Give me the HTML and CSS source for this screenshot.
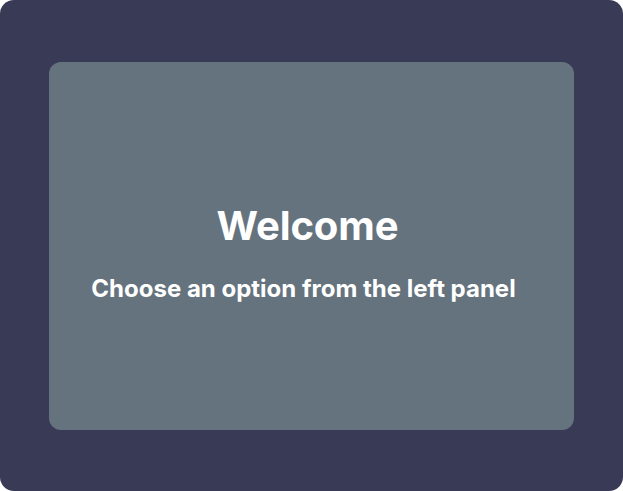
FILE: index.html
```html
<!DOCTYPE html>
<html>
<head>
<meta charset="utf-8">
<link rel="stylesheet" href="styles.css">
</head>
<body>
<div class="app">
  <main class="card">
    <h1 class="title">Welcome</h1>
    <p class="subtitle">Choose an option from the left panel</p>
  </main>
</div>
</body>
</html>
```
FILE: styles.css
```css
html, body {
  margin: 0;
  padding: 0;
  background: #ffffff;
}
body {
  width: 623px;
  height: 491px;
  font-family: Inter, "Noto Sans", sans-serif;
}
.app {
  box-sizing: border-box;
  width: 623px;
  height: 491px;
  background: #393a56;
  border-radius: 14px;
  padding: 62px 49px 61px 49px;
  display: flex;
}
.card {
  flex: 1;
  box-sizing: border-box;
  padding: 13px 8px 0 0;
  background: #65737e;
  border-radius: 12px;
  display: flex;
  flex-direction: column;
  align-items: center;
  justify-content: center;
  color: #ffffff;
}
.title {
  margin: 0;
  font-size: 40px;
  font-weight: 700;
  line-height: 48px;
  letter-spacing: -0.1px;
}
.subtitle {
  margin: 24px 0 0 0;
  padding-right: 8px;
  font-size: 24px;
  font-weight: 700;
  line-height: 29px;
}
```
